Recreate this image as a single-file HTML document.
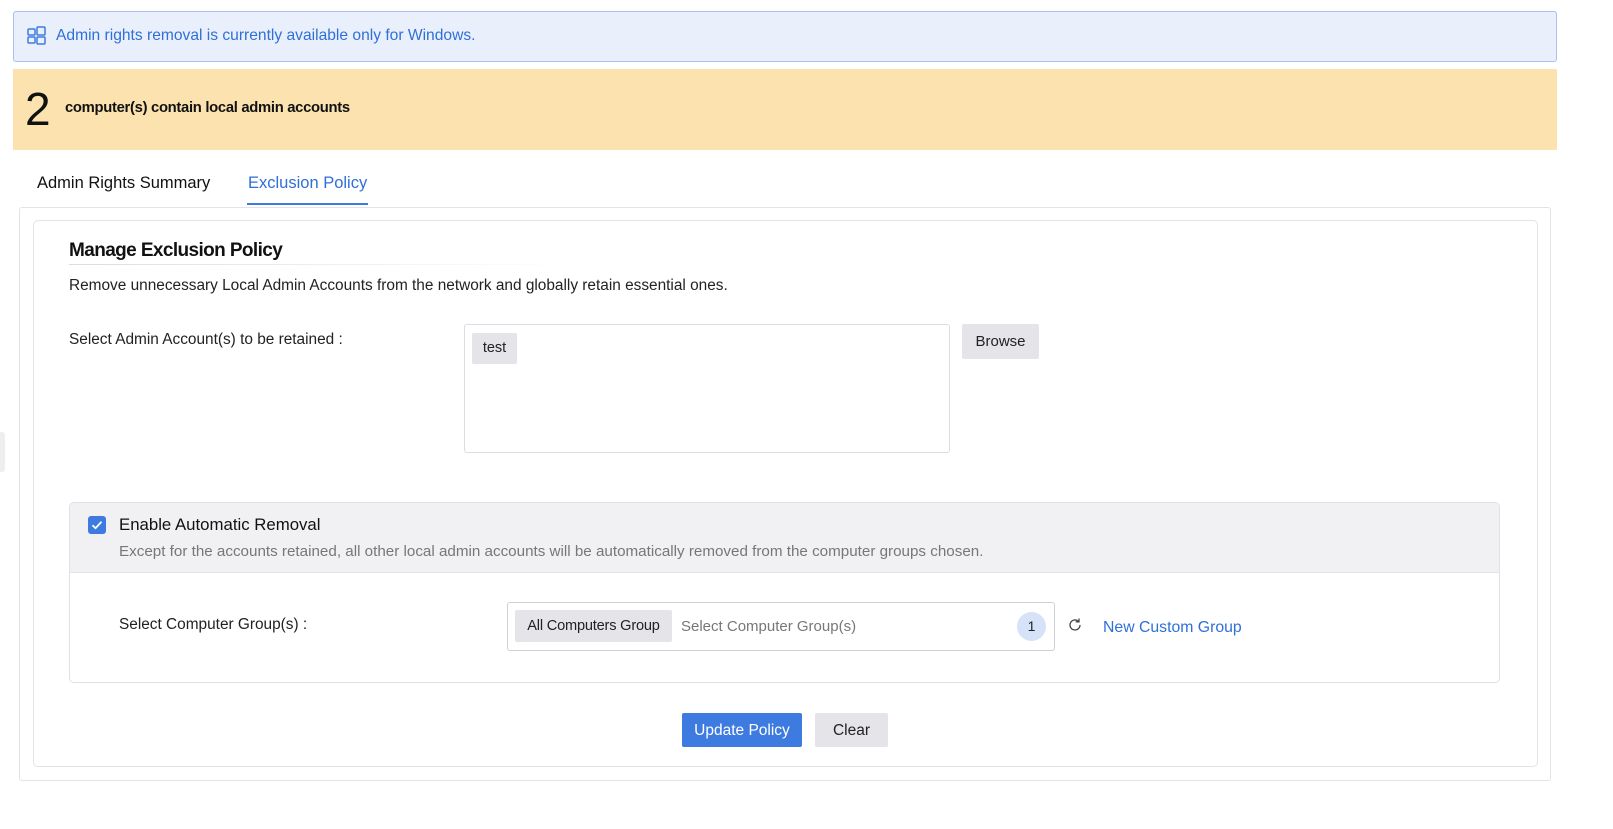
<!DOCTYPE html>
<html><head><meta charset="utf-8"><style>
*{box-sizing:border-box;margin:0;padding:0}
body{width:1613px;height:829px;background:#fff;font-family:"Liberation Sans",sans-serif;color:#222;position:relative;overflow:hidden}
.a{position:absolute}
.t{white-space:nowrap}
</style></head><body>
<div class="a" style="left:13px;top:11px;width:1544px;height:51px;background:#e9f0fc;border:1px solid #a9c1f0;border-radius:3px"></div>
<svg class="a" style="left:27px;top:26px" width="20" height="20" viewBox="0 0 20 20" fill="none" stroke="#3d7be0" stroke-width="1.5"><rect x="1" y="3" width="7" height="6" rx="1"/><rect x="1" y="11" width="7" height="6" rx="1"/><rect x="10" y="1" width="8" height="8" rx="1"/><rect x="10" y="11" width="8" height="7" rx="1"/></svg>
<div class="a t" style="left:56px;top:27px;font-size:15.6px;color:#2f6fd8">Admin rights removal is currently available only for Windows.</div>
<div class="a" style="left:13px;top:69px;width:1544px;height:81px;background:#fbe2ae"></div>
<div class="a t" style="left:25px;top:84px;font-size:46px;color:#111;line-height:50px">2</div>
<div class="a t" style="left:65px;top:100px;font-size:14.8px;font-weight:bold;color:#111;letter-spacing:-0.3px">computer(s) contain local admin accounts</div>
<div class="a t" style="left:37px;top:174px;font-size:16.5px;color:#111">Admin Rights Summary</div>
<div class="a t" style="left:248px;top:174px;font-size:16.5px;color:#2f6fd8">Exclusion Policy</div>
<div class="a" style="left:247px;top:203px;width:121px;height:2px;background:#3d7be0"></div>
<div class="a" style="left:19px;top:207px;width:1532px;height:574px;border:1px solid #e2e2e8;border-radius:3px"></div>
<div class="a" style="left:33px;top:220px;width:1505px;height:547px;border:1px solid #e2e2e8;border-radius:5px"></div>
<div class="a" style="left:0;top:432px;width:5px;height:40px;background:#eee;border-radius:0 3px 3px 0"></div>
<div class="a t" style="left:69px;top:240px;font-size:19px;font-weight:bold;color:#111;letter-spacing:-0.6px">Manage Exclusion Policy</div>
<div class="a" style="left:69px;top:264px;width:500px;height:1px;background:linear-gradient(90deg,#ddd,#fff)"></div>
<div class="a t" style="left:69px;top:277px;font-size:15.4px;color:#222">Remove unnecessary Local Admin Accounts from the network and globally retain essential ones.</div>
<div class="a t" style="left:69px;top:331px;font-size:15.4px;color:#222">Select Admin Account(s) to be retained :</div>
<div class="a" style="left:464px;top:324px;width:486px;height:129px;border:1px solid #dcdce2;border-radius:3px"></div>
<div class="a t" style="left:472px;top:333px;width:45px;height:31px;background:#e4e4e9;border-radius:2px;font-size:14.5px;line-height:31px;text-align:center">test</div>
<div class="a t" style="left:962px;top:324px;width:77px;height:35px;background:#e4e4e9;border-radius:2px;font-size:15px;line-height:35px;text-align:center;color:#222">Browse</div>
<div class="a" style="left:69px;top:502px;width:1431px;height:181px;border:1px solid #e0e0e6;border-radius:5px;overflow:hidden"><div style="height:70px;background:#f1f1f3;border-bottom:1px solid #e4e4e8"></div></div>
<div class="a" style="left:88px;top:516px;width:18px;height:18px;background:#3d7be0;border-radius:3px"></div>
<svg class="a" style="left:88px;top:516px" width="18" height="18" viewBox="0 0 18 18"><path d="M4.5 9.2l3 3 6-6.4" fill="none" stroke="#fff" stroke-width="1.8"/></svg>
<div class="a t" style="left:119px;top:515px;font-size:16.8px;color:#111">Enable Automatic Removal</div>
<div class="a t" style="left:119px;top:543px;font-size:15.2px;color:#777">Except for the accounts retained, all other local admin accounts will be automatically removed from the computer groups chosen.</div>
<div class="a t" style="left:119px;top:616px;font-size:15.4px;color:#222">Select Computer Group(s) :</div>
<div class="a" style="left:507px;top:602px;width:548px;height:49px;border:1px solid #cfcfd6;border-radius:3px"></div>
<div class="a t" style="left:515px;top:610px;width:157px;height:32px;background:#e4e4e9;border-radius:2px;font-size:14.6px;line-height:32px;text-align:center;letter-spacing:-0.2px">All Computers Group</div>
<div class="a t" style="left:681px;top:618px;font-size:15px;color:#777">Select Computer Group(s)</div>
<div class="a t" style="left:1017px;top:612px;width:29px;height:29px;border-radius:50%;background:#d6e2f8;font-size:14px;line-height:29px;text-align:center">1</div>
<svg class="a" style="left:1067px;top:617px" width="16" height="16" viewBox="0 0 16 16" fill="none" stroke="#444" stroke-width="1.3"><path d="M13 8a5 5 0 1 1-1.6-3.7"/><path d="M12 1.5v3.3H8.7"/></svg>
<div class="a t" style="left:1103px;top:619px;font-size:15.8px;color:#2f6fd8">New Custom Group</div>
<div class="a t" style="left:682px;top:713px;width:120px;height:34px;background:#3d7be0;border-radius:2px;font-size:15.5px;line-height:36px;text-align:center;color:#fff">Update Policy</div>
<div class="a t" style="left:815px;top:713px;width:73px;height:34px;background:#e4e4e9;border-radius:2px;font-size:15.5px;line-height:36px;text-align:center;color:#222">Clear</div>
</body></html>
